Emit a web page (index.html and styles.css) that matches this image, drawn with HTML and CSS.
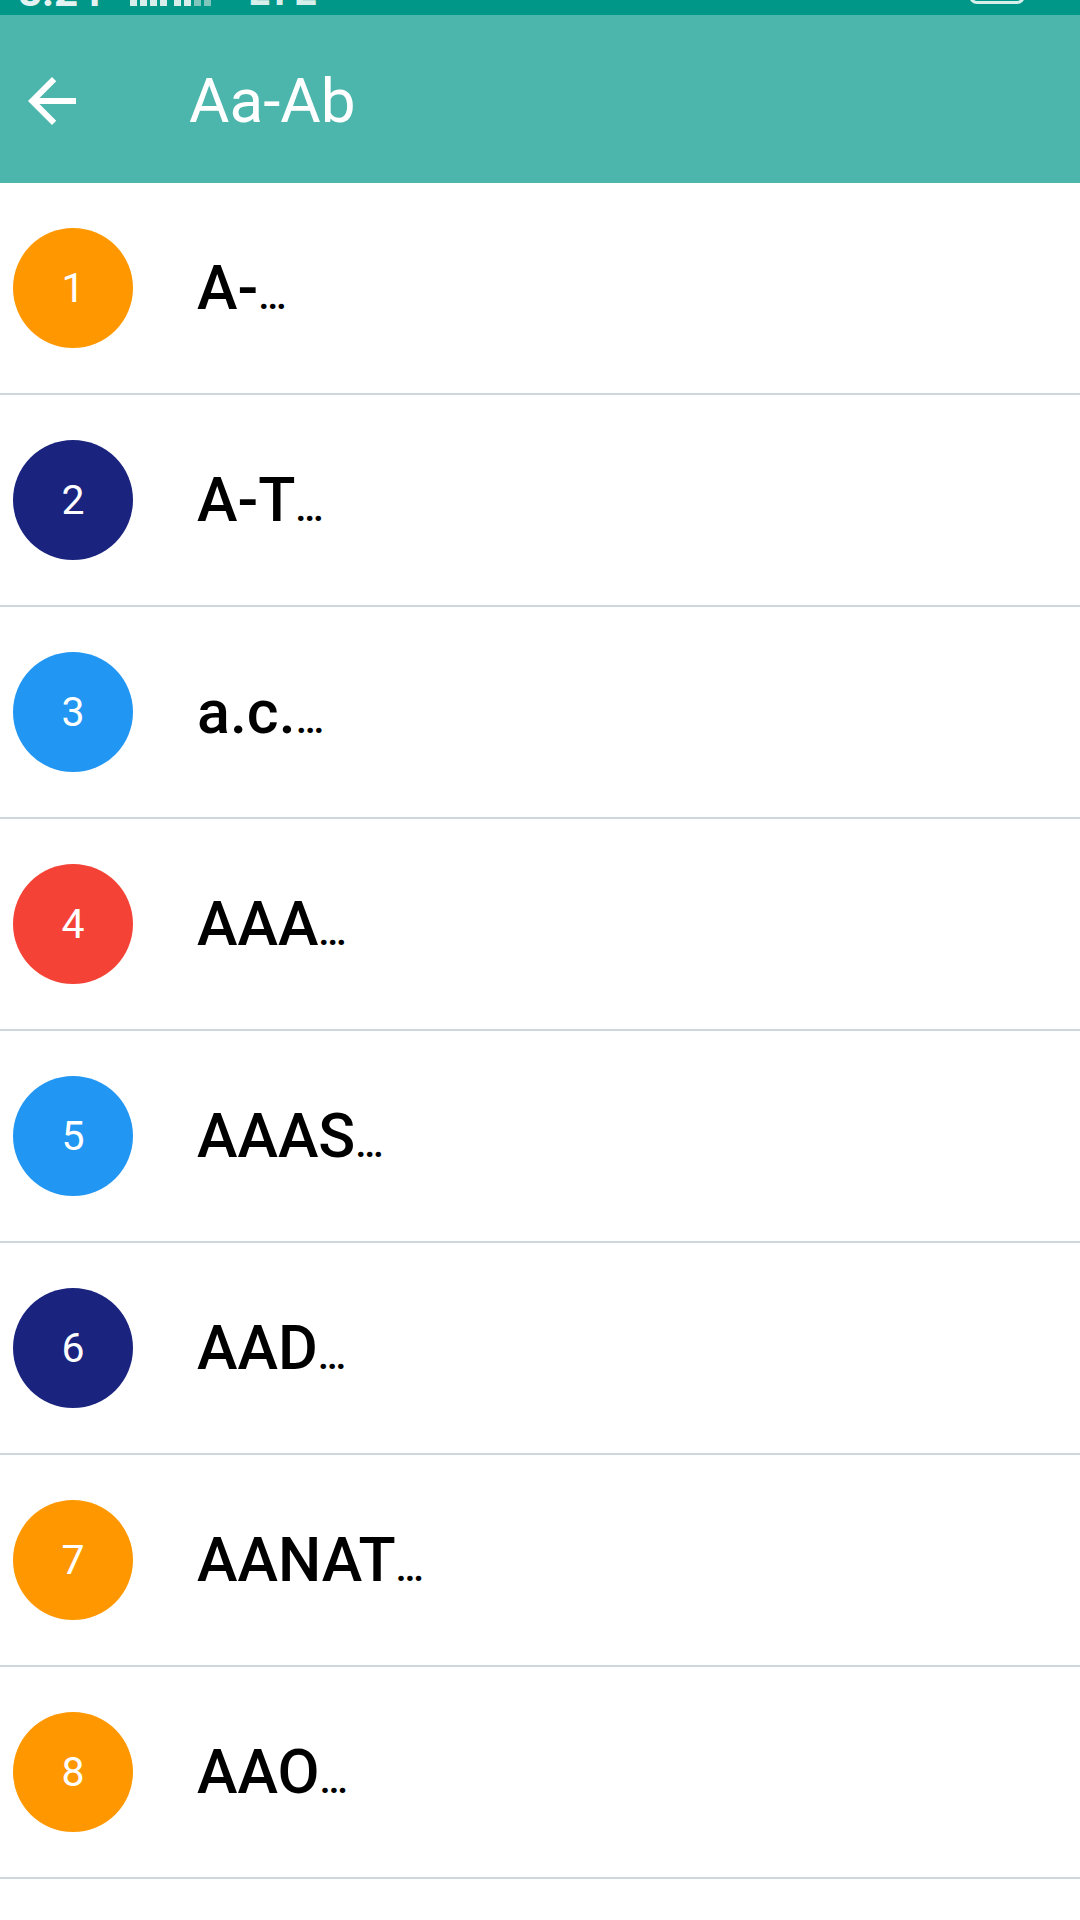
FILE: index.html
```html
<!DOCTYPE html>
<html lang="en">
<head>
    <meta charset="UTF-8">
    <meta name="viewport" content="width=device-width, initial-scale=1.0">
    <title>Aa-Ab</title>
    <link rel="stylesheet" href="styles.css">
</head>
<body>
    <div class="status-bar">
        <div class="status-left">
            <span class="clock">8:24</span>
            <svg class="signal" width="90" height="40" viewBox="0 0 90 40">
                <rect x="0" y="4" width="7" height="36" fill="#d7eeeb"/>
                <rect x="10" y="4" width="7" height="36" fill="#d7eeeb"/>
                <rect x="20" y="4" width="7" height="36" fill="#d7eeeb"/>
                <rect x="30" y="4" width="7" height="36" fill="#d7eeeb"/>
                <rect x="44" y="4" width="7" height="36" fill="#d7eeeb"/>
                <rect x="54" y="4" width="7" height="36" fill="#d7eeeb"/>
                <rect x="64" y="4" width="7" height="36" fill="#7fc7bd"/>
                <rect x="74" y="4" width="7" height="36" fill="#7fc7bd"/>
            </svg>
            <span class="net">LTE</span>
        </div>
        <div class="battery"></div>
    </div>

    <header class="toolbar">
        <button class="back-btn" aria-label="Back">
            <svg width="72" height="72" viewBox="0 0 24 24">
                <path d="M20 11H7.83l5.59-5.59L12 4l-8 8 8 8 1.41-1.41L7.83 13H20v-2z" fill="#ffffff"/>
            </svg>
        </button>
        <h1 class="title">Aa-Ab</h1>
    </header>

    <ul class="list">
        <li class="item"><span class="badge orange">1</span><span class="label">A-<span class="more">…</span></span></li>
        <li class="item"><span class="badge navy">2</span><span class="label">A-T<span class="more">…</span></span></li>
        <li class="item"><span class="badge blue">3</span><span class="label">a.c.<span class="more">…</span></span></li>
        <li class="item"><span class="badge red">4</span><span class="label">AAA<span class="more">…</span></span></li>
        <li class="item"><span class="badge blue">5</span><span class="label">AAAS<span class="more">…</span></span></li>
        <li class="item"><span class="badge navy">6</span><span class="label">AAD<span class="more">…</span></span></li>
        <li class="item"><span class="badge orange">7</span><span class="label">AANAT<span class="more">…</span></span></li>
        <li class="item"><span class="badge orange">8</span><span class="label">AAO<span class="more">…</span></span></li>
    </ul>
</body>
</html>
```

FILE: styles.css
```css
* {
    margin: 0;
    padding: 0;
    box-sizing: border-box;
}

body {
    font-family: Roboto, "Noto Sans", "Liberation Sans", sans-serif;
    background: #ffffff;
    width: 1080px;
    min-height: 1920px;
}

/* status bar, only its lower edge is on screen */
.status-bar {
    height: 15px;
    background: #009688;
    overflow: hidden;
    display: flex;
    justify-content: space-between;
    padding: 0 55px 0 18px;
}

.status-left {
    display: flex;
    align-items: flex-start;
    gap: 28px;
}

.clock {
    font-size: 42px;
    line-height: 40px;
    font-weight: 700;
    color: #e4f3f1;
    margin-top: -28px;
}

.signal {
    display: block;
    margin-top: -34px;
}

.net {
    font-size: 40px;
    line-height: 40px;
    font-weight: 700;
    color: #d7eeeb;
    letter-spacing: 2px;
    margin-top: -28px;
}

.battery {
    width: 56px;
    height: 30px;
    margin-top: -26px;
    border: 3px solid #d7eeeb;
    border-radius: 8px;
}

.toolbar {
    height: 168px;
    background: #4db6ac;
    display: flex;
    align-items: center;
    padding: 4px 0 0 16px;
}

.back-btn {
    width: 72px;
    height: 72px;
    background: none;
    border: none;
    display: flex;
    align-items: center;
    justify-content: center;
}

.back-btn svg {
    display: block;
}

.title {
    margin-left: 101px;
    font-size: 62px;
    font-weight: 400;
    color: #ffffff;
    line-height: 1;
}

.list {
    list-style: none;
}

.item {
    height: 212px;
    border-bottom: 2px solid #cfd6dc;
    display: flex;
    align-items: center;
    padding-left: 13px;
}

.badge {
    width: 120px;
    height: 120px;
    border-radius: 50%;
    display: flex;
    align-items: center;
    justify-content: center;
    color: #ffffff;
    font-size: 41px;
    flex-shrink: 0;
}

.orange { background: #ff9800; }
.navy { background: #1a237e; }
.blue { background: #2196f3; }
.red { background: #f44336; }

.label {
    margin-left: 64px;
    font-size: 61px;
    font-weight: 500;
    color: #000000;
    line-height: 1;
}

.more {
    font-size: 40px;
}
```
